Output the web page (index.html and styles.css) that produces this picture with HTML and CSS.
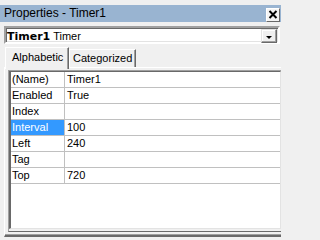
FILE: index.html
```html
<!DOCTYPE html>
<html>
<head>
<meta charset="utf-8">
<link rel="stylesheet" href="styles.css">
</head>
<body>
<div class="window">
  <div class="titlebar">
    <span class="title">Properties - Timer1</span>
    <span class="close"><svg width="10" height="9" viewBox="0 0 10 9"><path d="M1.5 1 L8.5 8 M8.5 1 L1.5 8" stroke="#000" stroke-width="2" fill="none"/></svg></span>
  </div>
  <div class="combo">
    <div class="combo-text"><b>Timer1</b> Timer</div>
    <div class="drop"><span class="arrow"></span></div>
  </div>
  <div class="tabs">
    <div class="tab active">Alphabetic</div>
    <div class="tab">Categorized</div>
  </div>
  <div class="pane">
    <div class="grid">
      <div class="grid-body">
        <div class="row"><div class="name">(Name)</div><div class="value">Timer1</div></div>
        <div class="row"><div class="name">Enabled</div><div class="value">True</div></div>
        <div class="row"><div class="name">Index</div><div class="value"></div></div>
        <div class="row"><div class="name selected">Interval</div><div class="value">100</div></div>
        <div class="row"><div class="name">Left</div><div class="value">240</div></div>
        <div class="row"><div class="name">Tag</div><div class="value"></div></div>
        <div class="row"><div class="name">Top</div><div class="value">720</div></div>
      </div>
    </div>
  </div>
</div>
</body>
</html>
```
FILE: styles.css
```css
html, body {
  margin: 0;
  padding: 0;
  background: #f0f0f0;
}
body {
  width: 281px;
  height: 237px;
  overflow: hidden;
  font-family: "Liberation Sans", Arial, sans-serif;
  font-size: 11px;
  color: #000;
}
.window {
  display: flex;
  flex-direction: column;
}
.titlebar {
  margin-top: 5px;
  height: 17px;
  background: #99b4d1;
  display: flex;
  align-items: center;
  justify-content: space-between;
  padding-left: 4px;
}
.titlebar .title {
  font-family: "Liberation Sans", Arial, sans-serif;
  font-size: 12px;
  line-height: 17px;
}
.close {
  width: 12px;
  height: 12px;
  margin-right: 1px;
  background: #f4f4f4;
  border: 1px solid;
  border-color: #ffffff #696969 #696969 #ffffff;
  display: flex;
  align-items: center;
  justify-content: center;
  margin-top: 2px;
}
.close svg { display: block; }
.combo {
  margin: 4px 1px 0 4px;
  height: 14px;
  border: 2px solid;
  border-color: #a0a0a0 #ffffff #ffffff #a0a0a0;
  box-shadow: inset 1px 1px 0 #696969, inset -1px -1px 0 #e3e3e3;
  background: #ffffff;
  display: flex;
  align-items: stretch;
  padding: 0 1px 0 1px;
}
.combo-text {
  flex: 1;
  padding-left: 0;
  line-height: 14px;
  padding-top: 1px;
}
.combo-text b {
  font-family: "DejaVu Sans", sans-serif;
  font-weight: bold;
  font-size: 11px;
}
.drop {
  width: 14px;
  height: 12px;
  margin-top: 1px;
  border: 1px solid;
  border-color: #e3e3e3 #696969 #696969 #e3e3e3;
  box-shadow: inset -1px -1px 0 #a0a0a0, inset 1px 1px 0 #fff;
  background: #f0f0f0;
  display: flex;
  align-items: center;
  justify-content: center;
}
.arrow {
  width: 0;
  height: 0;
  border-left: 3px solid transparent;
  border-right: 3px solid transparent;
  border-top: 3px solid #000;
  margin-top: 2px;
}
.tabs {
  margin-top: 3px;
  padding-left: 5px;
  height: 20px;
  display: flex;
  align-items: flex-end;
}
.tab {
  height: 17px;
  padding: 0 4px 0 3px;
  border: 1px solid;
  border-bottom: none;
  border-color: #ffffff #696969 transparent #ffffff;
  box-shadow: inset -1px 0 0 #a0a0a0;
  line-height: 17px;
  background: #f0f0f0;
}
.tab.active {
  height: 21px;
  margin-bottom: -2px;
  padding: 0 5px 0 6px;
  line-height: 19px;
  position: relative;
  z-index: 1;
  width: 51px;
}
.tab:not(.active) {
  width: 58px;
}
.pane {
  margin-left: 4px;
  width: 274px;
  height: 164px;
  border-style: solid;
  border-width: 1px 1px 2px 1px;
  border-color: #ffffff #696969 #696969 #ffffff;
  padding: 2px 1px 1px 3px;
  box-shadow: inset 0 -1px 0 #a0a0a0;
}
.grid {
  height: 160px;
  border: 1px solid;
  border-color: #a0a0a0 #696969 #696969 #a0a0a0;
}
.grid-body {
  height: 156px;
  border-style: solid;
  border-width: 1px 1px 1px 2px;
  border-color: #696969 #e3e3e3 #e3e3e3 #696969;
  background: #ffffff;
}
.row {
  display: flex;
  height: 15px;
  border-bottom: 1px solid #c0c0c0;
  line-height: 15px;
}
.name {
  width: 52px;
  padding-left: 1px;
  border-right: 1px solid #c0c0c0;
}
.name.selected {
  background: #3399ff;
  color: #ffffff;
}
.value {
  flex: 1;
  padding-left: 2px;
}
```
